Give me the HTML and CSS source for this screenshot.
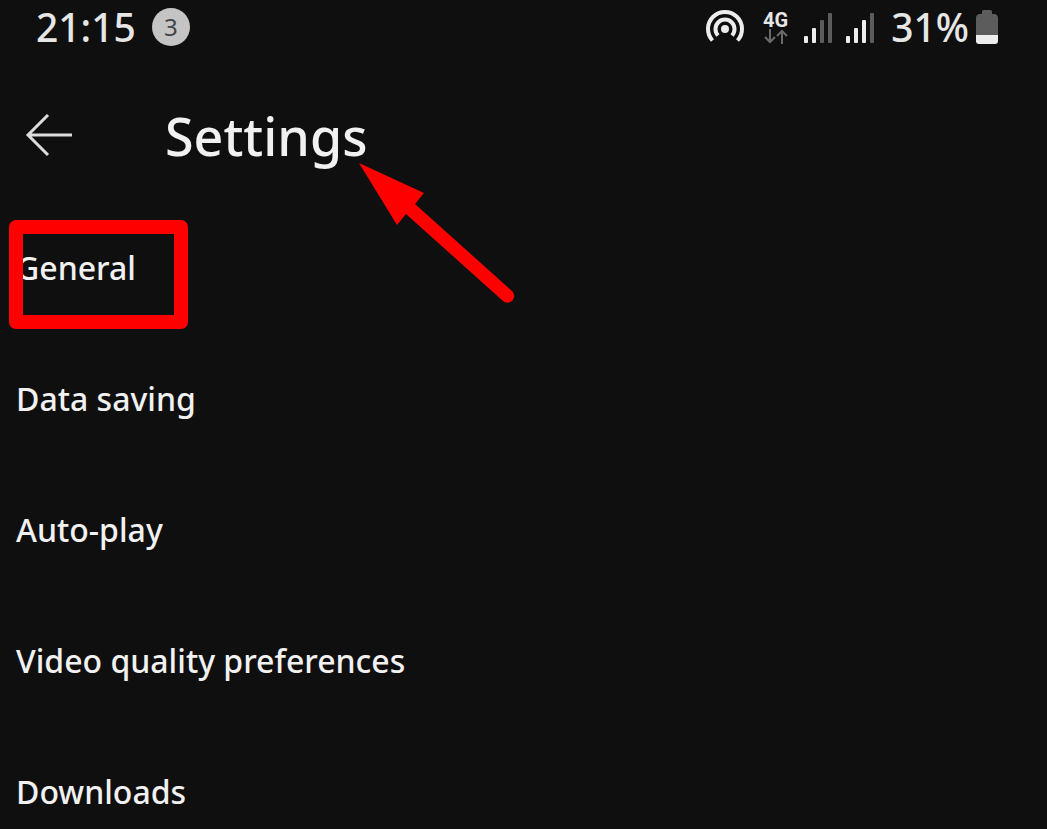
FILE: index.html
```html
<!DOCTYPE html>
<html lang="en">
<head>
    <meta charset="UTF-8">
    <meta name="viewport" content="width=device-width, initial-scale=1.0">
    <title>Settings</title>
    <link rel="stylesheet" href="styles.css">
</head>
<body>

    <!-- Status bar -->
    <div class="status-bar">
        <span class="clock">21:15</span>
        <span class="badge">3</span>

        <div class="status-icons">
            <svg class="hotspot" width="40" height="36" viewBox="0 0 40 36" fill="none" stroke="#ededed" stroke-width="4">
                <path d="M7.5 31.500A17 17 0 1 1 32.500 31.500"/>
                <path d="M13 26.500A9.500 9.500 0 1 1 27 26.500"/>
                <circle cx="20" cy="20" r="4" fill="#ededed" stroke="none"/>
            </svg>
            <div class="network">
                <span class="network-type">4G</span>
                <svg width="24" height="15" viewBox="0 0 24 15" fill="none" stroke="#6a6a6a" stroke-width="2">
                    <path d="M6 0V13M1 8L6 13L11 8"/>
                    <path d="M18 15V2M13 7L18 2L23 7"/>
                </svg>
            </div>
            <svg class="signal" width="28" height="32" viewBox="0 0 28 32">
                <rect x="0" y="25" width="4" height="7" rx="1" fill="#ededed"/>
                <rect x="8" y="17" width="4" height="15" rx="1" fill="#ededed"/>
                <rect x="16" y="9" width="4" height="23" rx="1" fill="#5c5c5c"/>
                <rect x="24" y="2" width="4" height="30" rx="1" fill="#5c5c5c"/>
            </svg>
            <svg class="signal" width="28" height="32" viewBox="0 0 28 32">
                <rect x="0" y="25" width="4" height="7" rx="1" fill="#ededed"/>
                <rect x="8" y="17" width="4" height="15" rx="1" fill="#ededed"/>
                <rect x="16" y="9" width="4" height="23" rx="1" fill="#ededed"/>
                <rect x="24" y="2" width="4" height="30" rx="1" fill="#5c5c5c"/>
            </svg>
            <span class="percent">31%</span>
            <svg class="battery" width="22" height="34" viewBox="0 0 22 34">
                <path d="M6 1.500Q6 0 7.500 0H14.500Q16 0 16 1.500V4H19Q22 5 22 8V25H0V8Q0 5 3 4H6Z" fill="#5c5c5c"/>
                <path d="M0 25H22V31Q22 34 19 34H3Q0 34 0 31Z" fill="#ededed"/>
            </svg>
        </div>
    </div>

    <!-- Page header -->
    <header class="header">
        <button class="back" type="button" aria-label="Back">
            <svg width="48" height="44" viewBox="0 0 48 44" fill="none" stroke="#dcdcdc" stroke-width="3">
                <path d="M47 21H3M23 1L3 21L23 41"/>
            </svg>
        </button>
        <h1 class="title">Settings
            <svg class="pointer" width="158" height="142" viewBox="0 0 158 142" aria-hidden="true">
                <path d="M0 0L65 30L56 41L153 128A6.500 6.500 0 0 1 144 138L47 51L38 62Z" fill="#ff0000"/>
            </svg>
        </h1>
    </header>

    <!-- Settings list -->
    <ul class="settings">
        <li class="highlighted"><a href="#">General</a></li>
        <li><a href="#">Data saving</a></li>
        <li><a href="#">Auto-play</a></li>
        <li><a href="#">Video quality preferences</a></li>
        <li><a href="#">Downloads</a></li>
    </ul>

</body>
</html>
```
FILE: styles.css
```css
body {
    margin: 0;
    background: #0f0f0f;
    color: #f1f1f1;
    font-family: "Noto Sans", sans-serif;
    font-weight: 500;
    overflow: hidden;
}

/* Status bar */
.status-bar {
    display: flex;
    align-items: center;
    height: 54px;
    padding: 0 49px 0 36px;
    box-sizing: border-box;
    color: #e6e6e6;
}
.clock,
.percent {
    font-size: 39px;
    line-height: 54px;
}
.percent {
    margin-left: 3px;
}
.badge {
    width: 38px;
    height: 38px;
    margin-left: 16px;
    border-radius: 50%;
    background: #c4c4c4;
    color: #444;
    font-size: 24px;
    font-weight: 400;
    line-height: 38px;
    text-align: center;
}
.status-icons {
    display: flex;
    align-items: center;
    margin-left: auto;
}
.network {
    display: flex;
    flex-direction: column;
    align-items: center;
    margin: 0 16px 0 18px;
}
.network-type {
    font-family: Roboto, sans-serif;
    font-size: 20px;
    font-weight: 700;
    line-height: 18px;
}
.signal {
    margin-right: 14px;
}
.battery {
    margin-left: 7px;
}

/* Header */
.header {
    display: flex;
    align-items: center;
    height: 148px;
    padding: 15px 24px 0 25px;
    box-sizing: border-box;
}
.back {
    display: flex;
    margin: 0 92px 0 0;
    padding: 0;
    border: 0;
    background: none;
}
.title {
    position: relative;
    margin: 0;
    font-size: 52px;
    font-weight: 500;
    line-height: 72px;
}
.pointer {
    position: absolute;
    top: 63px;
    left: 194px;
}

/* List */
.settings {
    margin: 0;
    padding: 0;
    list-style: none;
}
.settings li {
    position: relative;
}
.settings a {
    display: block;
    padding: 0 16px;
    color: inherit;
    font-size: 32px;
    line-height: 131px;
    text-decoration: none;
}
.highlighted::after {
    content: "";
    position: absolute;
    top: 18px;
    left: 9px;
    width: 151px;
    height: 81px;
    border: 14px solid #ff0000;
    border-radius: 7px;
}
```
